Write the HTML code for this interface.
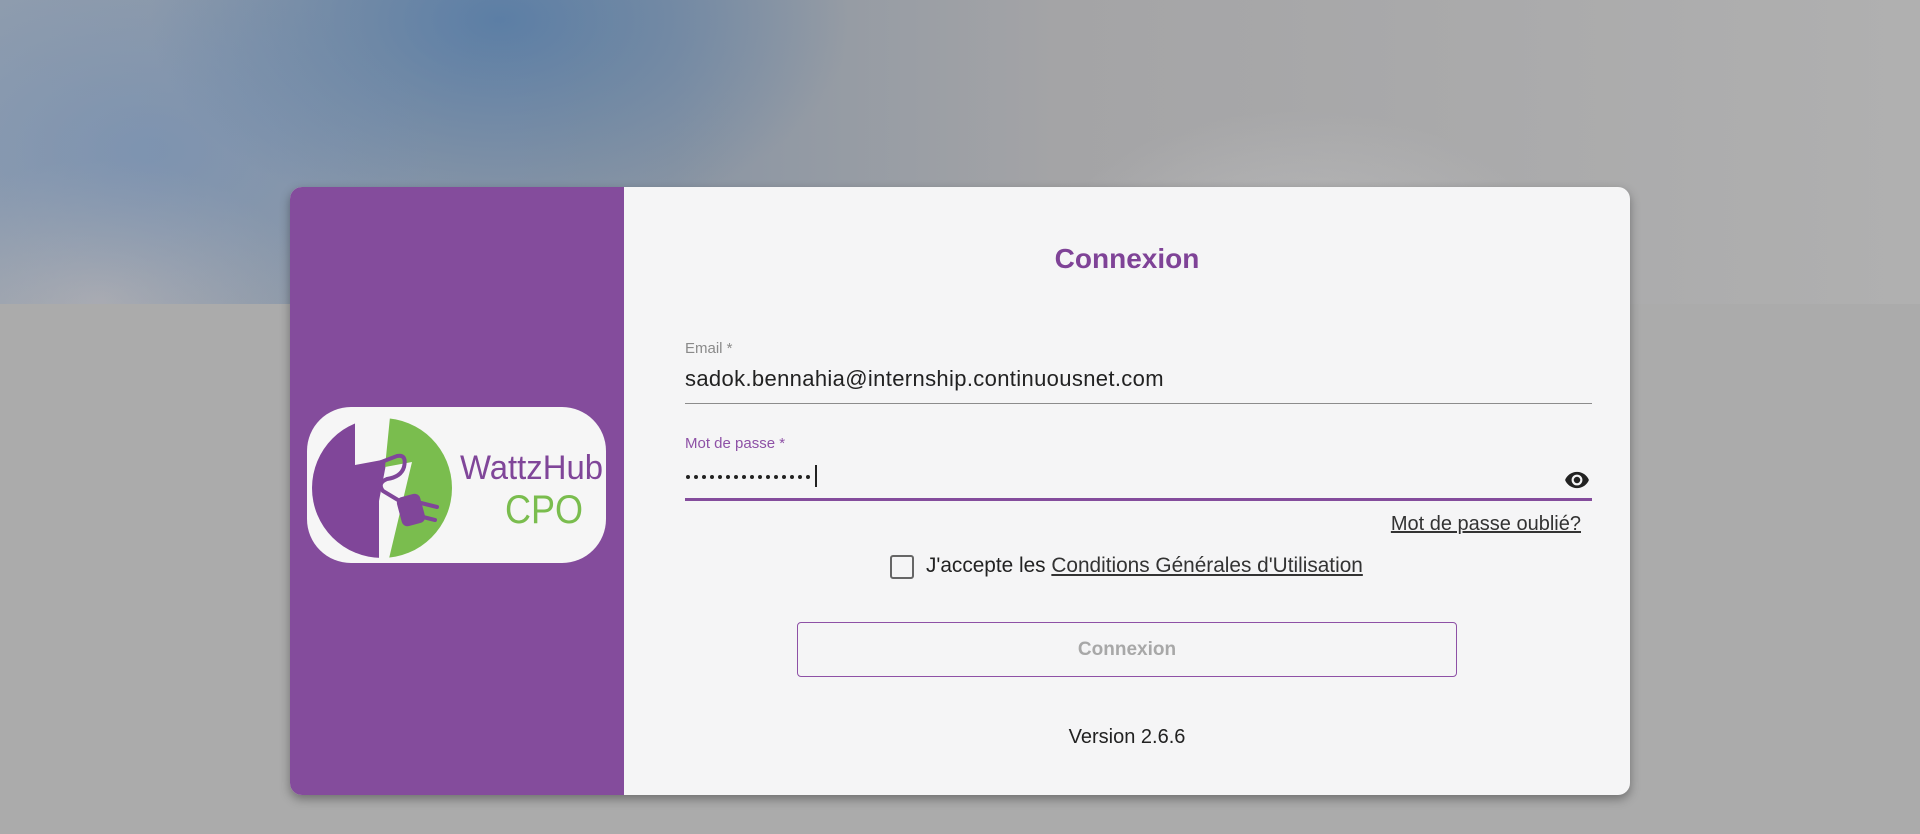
<!DOCTYPE html>
<html><head><meta charset="utf-8"><style>
*{margin:0;padding:0;box-sizing:border-box}
body{width:1920px;height:834px;overflow:hidden;background:#ababab;font-family:"Liberation Sans",sans-serif;position:relative}
.sky{position:absolute;left:0;top:0;width:1920px;height:304px;
background:
radial-gradient(ellipse 500px 300px at 500px 20px,rgba(80,120,165,.8),rgba(80,120,165,0) 70%),
radial-gradient(ellipse 400px 250px at 150px 150px,rgba(110,140,180,.5),rgba(110,140,180,0) 70%),
radial-gradient(ellipse 300px 200px at 100px 300px,rgba(185,180,180,.7),rgba(185,180,180,0) 70%),
radial-gradient(ellipse 350px 200px at 1300px 250px,rgba(200,200,200,.5),rgba(200,200,200,0) 70%),
linear-gradient(90deg,#8e9cae 0%,#8a95a3 35%,#a4a4a6 55%,#b0b0b0 100%)}
.card{position:absolute;left:290px;top:187px;width:1340px;height:608px;border-radius:12px;overflow:hidden;box-shadow:0 4px 10px rgba(0,0,0,.35);background:#f5f5f6}
.left{position:absolute;left:0;top:0;width:334px;height:608px;background:#844c9c}
.logo{position:absolute;left:17px;top:220px;width:299px;height:156px;border-radius:44px;background:#f6f6f6;overflow:hidden}
.abs{position:absolute}
h1{position:absolute;left:334px;width:1006px;top:56px;text-align:center;font-size:28px;font-weight:bold;color:#7f4397}
.lbl{font-size:15px;color:#8a8a8a}
a{color:#333;text-decoration:underline}
.dots{display:flex;gap:4px}
.dots i{width:4px;height:4px;border-radius:50%;background:#222;display:block}
</style></head><body>
<div class="sky"></div>
<div class="card">
 <div class="left">
  <div class="logo">
   <svg width="299" height="156" viewBox="0 0 299 156">
    <defs><clipPath id="c"><circle cx="75" cy="81" r="70"/></clipPath></defs>
    <g clip-path="url(#c)">
     <rect x="0" y="0" width="160" height="160" fill="#f6f6f6"/>
     <polygon points="0,0 48,0 48,58 80,52 72,94 72,160 0,160" fill="#804699"/>
     <polygon points="84,0 160,0 160,160 80,160 105,55 78,60" fill="#7abd4e"/>
    </g>
    <path d="M56,62 L90,49 Q100,47 97,60 Q94,70 80,72 Q70,76 76,84 L96,96" fill="none" stroke="#804699" stroke-width="4" stroke-linecap="round"/>
    <rect x="92" y="88" width="24" height="30" rx="6" fill="#804699" transform="rotate(-15 104 103)"/>
    <line x1="114" y1="96" x2="130" y2="100" stroke="#804699" stroke-width="4" stroke-linecap="round"/>
    <line x1="116" y1="110" x2="128" y2="113" stroke="#804699" stroke-width="4" stroke-linecap="round"/>
    <text x="153" y="72" font-family="Liberation Sans" font-size="34" fill="#804699" textLength="143" lengthAdjust="spacingAndGlyphs">WattzHub</text>
    <text x="198" y="116" font-family="Liberation Sans" font-size="40" fill="#7abd4e" textLength="78" lengthAdjust="spacingAndGlyphs">CPO</text>
   </svg>
  </div>
 </div>
 <h1>Connexion</h1>
 <div class="abs lbl" style="left:395px;top:153px">Email *</div>
 <div class="abs" style="left:395px;top:179px;font-size:22px;color:#222;letter-spacing:0.35px">sadok.bennahia@internship.continuousnet.com</div>
 <div class="abs" style="left:395px;top:216px;width:907px;height:1px;background:#8c8c8c"></div>
 <div class="abs lbl" style="left:395px;top:248px;color:#8e51a6">Mot de passe *</div>
 <div class="abs dots" style="left:396px;top:288px"><i></i><i></i><i></i><i></i><i></i><i></i><i></i><i></i><i></i><i></i><i></i><i></i><i></i><i></i><i></i><i></i></div>
 <div class="abs" style="left:525px;top:278px;width:1.5px;height:22px;background:#222"></div>
 <svg class="abs" style="left:1272px;top:280px" width="30" height="26" viewBox="0 0 24 24"><path fill="#222" d="M12 4.5C7 4.5 2.7 7.6 1 12c1.7 4.4 6 7.5 11 7.5s9.3-3.1 11-7.5c-1.7-4.4-6-7.5-11-7.5zM12 17a5 5 0 1 1 0-10 5 5 0 0 1 0 10zm0-8a3 3 0 1 0 0 6 3 3 0 0 0 0-6z"/></svg>
 <div class="abs" style="left:395px;top:311px;width:907px;height:3px;background:#844c9c"></div>
 <div class="abs" style="right:49px;top:326px;font-size:20px"><a>Mot de passe oublié?</a></div>
 <div class="abs" style="left:600px;top:368px;width:24px;height:24px;border:2.5px solid #666;border-radius:3px"></div>
 <div class="abs" style="left:636px;top:367px;font-size:20.8px;color:#222">J'accepte les <a>Conditions Générales d'Utilisation</a></div>
 <div class="abs" style="left:507px;top:435px;width:660px;height:55px;border:1px solid #8e51a6;border-radius:4px;text-align:center;line-height:53px;font-size:19px;font-weight:bold;color:#a8a8a8">Connexion</div>
 <div class="abs" style="left:334px;width:1006px;top:539px;text-align:center;font-size:20px;color:#222">Version 2.6.6</div>
</div>
</body></html>
